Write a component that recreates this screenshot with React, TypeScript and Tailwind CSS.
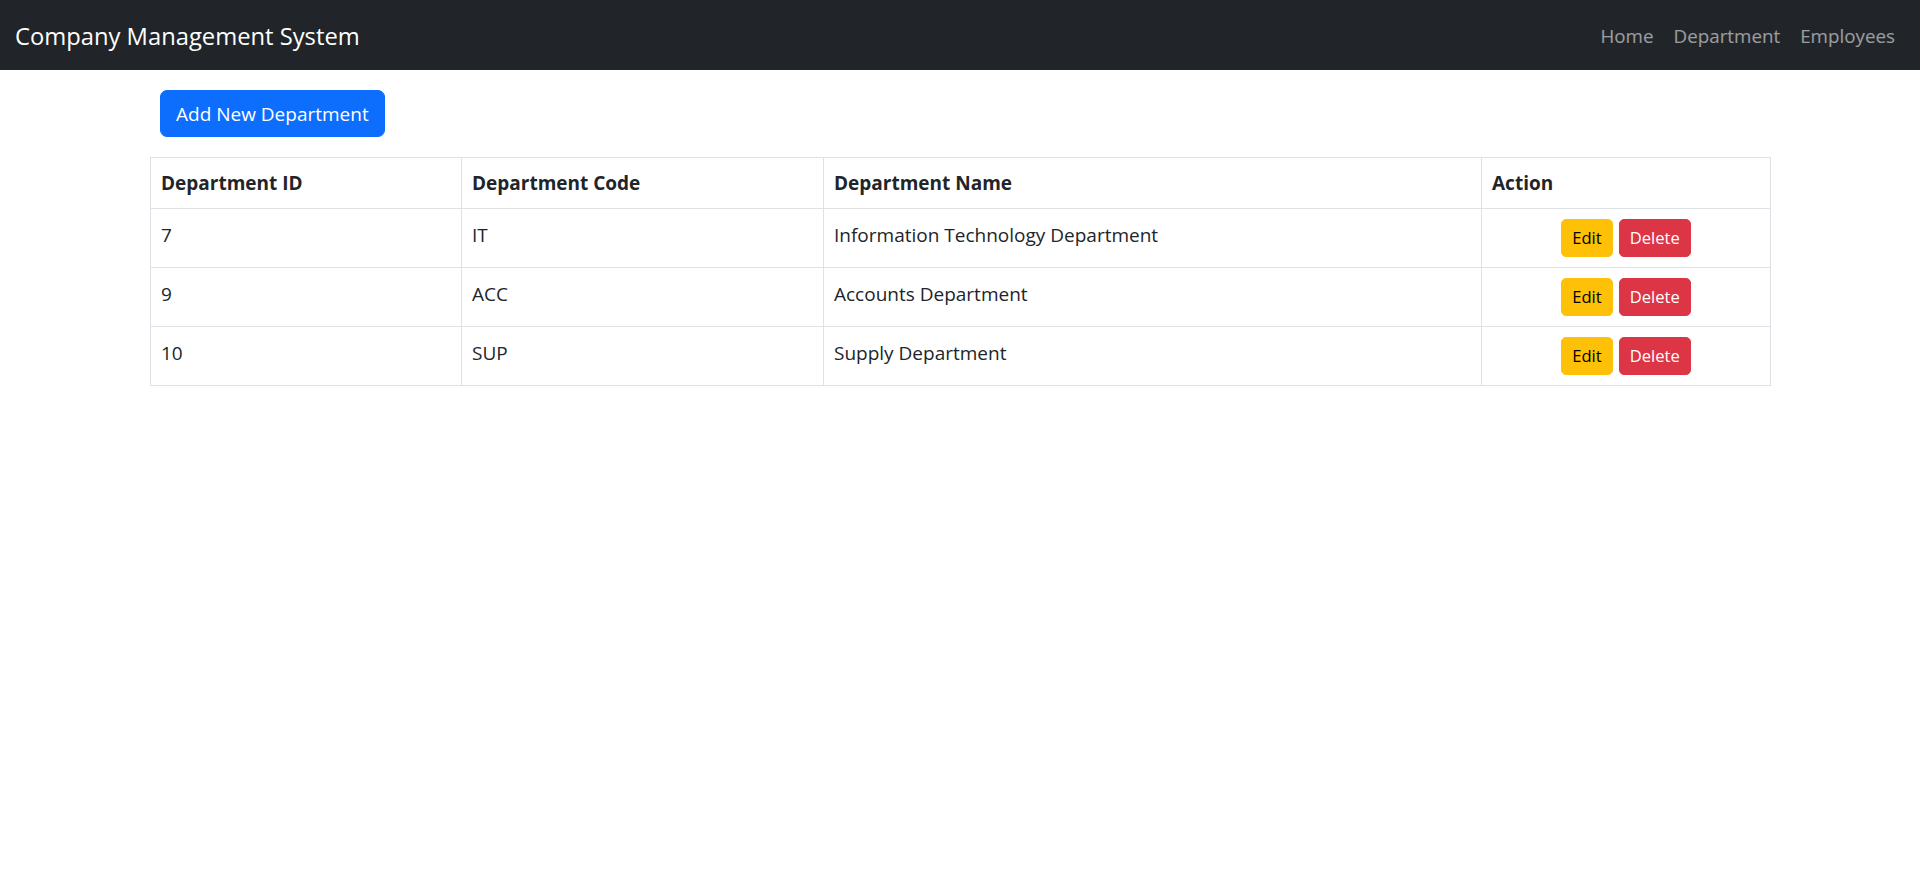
const departments = [
  { id: 7, code: "IT", name: "Information Technology Department" },
  { id: 9, code: "ACC", name: "Accounts Department" },
  { id: 10, code: "SUP", name: "Supply Department" },
];

export default function App() {
  return (
    <div
      className="min-h-screen bg-white text-[#212529]"
      style={{ fontFamily: '"Open Sans", "Noto Sans", sans-serif' }}
    >
      {/* Navbar */}
      <nav className="h-[70px] bg-[#212529] flex items-center justify-between px-[15px]">
        <a className="pt-[2px] text-[23.75px] leading-[37px] text-white">
          Company Management System
        </a>
        <ul className="flex pt-[2px]">
          {["Home", "Department", "Employees"].map((link) => (
            <li key={link}>
              <a className="block px-[10px] text-[18.8px] leading-[30px] text-white/55">
                {link}
              </a>
            </li>
          ))}
        </ul>
      </nav>

      <div className="w-[1620px] mx-auto">
        <button className="mt-[20px] ml-[10px] h-[47px] px-[15px] rounded-[7px] bg-[#0d6efd] border border-[#0d6efd] text-white text-[19px] leading-[30px]">
          Add New Department
        </button>

        <table className="mt-[20px] w-[1620px] table-fixed border-collapse border border-[#dee2e6] text-[19px] leading-[30px]">
          <colgroup>
            <col className="w-[311px]" />
            <col className="w-[362px]" />
            <col className="w-[658px]" />
            <col className="w-[289px]" />
          </colgroup>
          <thead>
            <tr>
              <th className="border border-[#dee2e6] p-[10px] text-left font-bold align-top">
                Department ID
              </th>
              <th className="border border-[#dee2e6] p-[10px] text-left font-bold align-top">
                Department Code
              </th>
              <th className="border border-[#dee2e6] p-[10px] text-left font-bold align-top">
                Department Name
              </th>
              <th className="border border-[#dee2e6] p-[10px] text-left font-bold align-top">
                Action
              </th>
            </tr>
          </thead>
          <tbody>
            {departments.map((dept) => (
              <tr key={dept.id}>
                <td className="border border-[#dee2e6] px-[10px] pt-[11px] pb-[9px] align-top">{dept.id}</td>
                <td className="border border-[#dee2e6] px-[10px] pt-[11px] pb-[9px] align-top">{dept.code}</td>
                <td className="border border-[#dee2e6] px-[10px] pt-[11px] pb-[9px] align-top">{dept.name}</td>
                <td className="border border-[#dee2e6] p-[10px] align-top text-center">
                  <div className="flex justify-center gap-[6px]">
                    <button className="h-[38px] px-[10px] rounded-[5px] bg-[#ffc107] border border-[#ffc107] text-black text-[16.6px] leading-[26px]">
                      Edit
                    </button>
                    <button className="h-[38px] px-[10px] rounded-[5px] bg-[#dc3545] border border-[#dc3545] text-white text-[16.6px] leading-[26px]">
                      Delete
                    </button>
                  </div>
                </td>
              </tr>
            ))}
          </tbody>
        </table>
      </div>
    </div>
  );
}
